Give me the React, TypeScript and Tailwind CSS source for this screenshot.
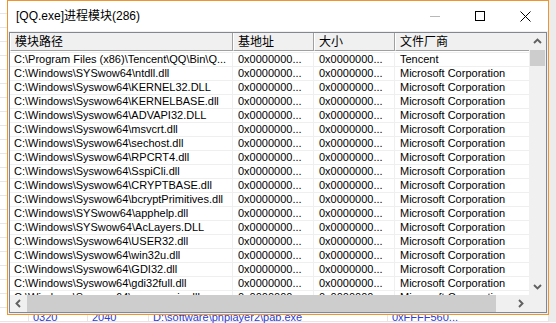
import React from "react";

const MS = "Microsoft Corporation";
const P = "C:\\Windows\\Syswow64\\";
const S = "C:\\Windows\\SYSwow64\\";
const HEX = "0x0000000...";

const rows: [string, string][] = [
  ["C:\\Program Files (x86)\\Tencent\\QQ\\Bin\\Q...", "Tencent"],
  [S + "ntdll.dll", MS],
  [P + "KERNEL32.DLL", MS],
  [P + "KERNELBASE.dll", MS],
  [P + "ADVAPI32.DLL", MS],
  [P + "msvcrt.dll", MS],
  [P + "sechost.dll", MS],
  [P + "RPCRT4.dll", MS],
  [P + "SspiCli.dll", MS],
  [P + "CRYPTBASE.dll", MS],
  [P + "bcryptPrimitives.dll", MS],
  [S + "apphelp.dll", MS],
  [S + "AcLayers.DLL", MS],
  [P + "USER32.dll", MS],
  [P + "win32u.dll", MS],
  [P + "GDI32.dll", MS],
  [P + "gdi32full.dll", MS],
  [P + "msvcp_win.dll", MS],
];

const font = { fontFamily: '"Liberation Sans", Arial, sans-serif' };
const cjk = { fontFamily: '"Liberation Sans", "Noto Sans CJK SC", sans-serif' };

function Chevron({ dir }: { dir: "up" | "down" | "left" | "right" }) {
  const pts =
    dir === "up"
      ? "1,6 4.5,2.5 8,6"
      : dir === "down"
      ? "1,3 4.5,6.5 8,3"
      : dir === "left"
      ? "6,1 2.5,4.5 6,8"
      : "3,1 6.5,4.5 3,8";
  return (
    <svg width="9" height="9" viewBox="0 0 9 9">
      <polyline points={pts} fill="none" stroke="#606060" strokeWidth="1.9" />
    </svg>
  );
}

const bgCols = ["w-[29px]", "w-[59px]", "w-[61px]", "w-[239px]", "w-[161px]"];

function BgRow({ texts }: { texts?: string[] }) {
  return (
    <div className="flex h-[14px] shrink-0">
      {bgCols.map((w, i) => (
        <div
          key={i}
          className={`${w} shrink-0 box-border h-[14px] border-r border-b border-[#e6e6e6] pl-[4px] pt-[3px] leading-[13px] text-[11px] text-[#2a3bd6] whitespace-nowrap`}
          style={font}
        >
          {texts ? texts[i] : ""}
        </div>
      ))}
      <div className="w-[7px] shrink-0 h-[14px] bg-[#ececec]" />
    </div>
  );
}

export default function App() {
  const bgRows = Array.from({ length: 22 });
  return (
    <div className="relative w-[556px] h-[323px] overflow-hidden bg-white">
      {/* background window */}
      <div className="flex flex-col">
        {bgRows.map((_, i) => (
          <BgRow key={i} />
        ))}
        <BgRow texts={["", "0320", "2040", "D:\\software\\pnplayer2\\pab.exe", "0xFFFF560..."]} />
      </div>

      {/* dialog */}
      <div className="absolute left-[7px] top-0 w-[542px] h-[315px] box-border border border-[#f0952b] bg-[#f0f0f0] flex flex-col">
        {/* title bar */}
        <div className="h-[30px] bg-white flex items-center shrink-0">
          <div className="pl-[8px] text-[12px] text-black flex-1 whitespace-nowrap" style={cjk}>
            [QQ.exe]进程模块(286)
          </div>
          <div className="w-[46px] h-[30px] flex items-center justify-center">
            <div className="w-[10px] h-[1px] bg-[#b8b8b8] ml-[3px]" />
          </div>
          <div className="w-[46px] h-[30px] flex items-center justify-center">
            <div className="w-[10px] h-[10px] box-border border border-black ml-[1px]" />
          </div>
          <div className="w-[46px] h-[30px] flex items-center justify-center">
            <svg width="11" height="11" viewBox="0 0 11 11" className="ml-[1px]">
              <path d="M0.5 0.5 L10.5 10.5 M10.5 0.5 L0.5 10.5" stroke="#000" strokeWidth="1" />
            </svg>
          </div>
        </div>

        {/* list view */}
        <div className="mt-[1px] ml-[1px] w-[538px] h-[281px] box-border border border-[#828790] bg-white flex">
          <div className="w-[519px] flex flex-col">
            {/* header */}
            <div className="h-[18px] flex overflow-hidden shrink-0">
              {[
                ["模块路径", "w-[223px]"],
                ["基地址", "w-[81px]"],
                ["大小", "w-[81px]"],
                ["文件厂商", "w-[150px]"],
              ].map(([t, w], i) => (
                <div
                  key={i}
                  className={`${w} shrink-0 box-border h-[18px] border-l border-l-white border-r border-r-[#a0a0a0] border-b border-b-[#a0a0a0] bg-[#f0f0f0] pl-[4px] text-[12px] leading-[16px] text-black whitespace-nowrap`}
                  style={{ fontFamily: '"Noto Sans CJK SC", sans-serif' }}
                >
                  {t}
                </div>
              ))}
            </div>
            {/* rows */}
            <div className="h-[244px] overflow-hidden flex flex-col pt-[1px] shrink-0">
              <div className="border-t border-[#efefef]" />
              {rows.map(([path, vendor], i) => (
                <div key={i} className="flex h-[14px] shrink-0 text-[11px] text-black" style={font}>
                  <div className="w-[223px] shrink-0 box-border h-[14px] border-r border-b border-[#efefef] pl-[4px] leading-[13px] whitespace-nowrap">
                    {path}
                  </div>
                  <div className="w-[81px] shrink-0 box-border h-[14px] border-r border-b border-[#efefef] pl-[5px] leading-[13px] whitespace-nowrap">
                    {HEX}
                  </div>
                  <div className="w-[81px] shrink-0 box-border h-[14px] border-r border-b border-[#efefef] pl-[5px] leading-[13px] whitespace-nowrap">
                    {HEX}
                  </div>
                  <div className="w-[150px] shrink-0 box-border h-[14px] border-r border-b border-[#efefef] pl-[5px] leading-[13px] whitespace-nowrap">
                    {vendor}
                  </div>
                </div>
              ))}
            </div>
            {/* horizontal scrollbar */}
            <div className="h-[17px] bg-[#f0f0f0] flex shrink-0">
              <div className="w-[17px] h-[17px] flex items-center justify-center">
                <Chevron dir="left" />
              </div>
              <div className="w-[469px] h-[17px] bg-[#cdcdcd]" />
              <div className="flex-1" />
              <div className="w-[17px] h-[17px] flex items-center justify-center">
                <Chevron dir="right" />
              </div>
            </div>
          </div>
          {/* vertical scrollbar */}
          <div className="w-[17px] flex flex-col">
            <div className="h-[262px] bg-[#f0f0f0] flex flex-col shrink-0">
              <div className="h-[17px] flex items-center justify-center">
                <Chevron dir="up" />
              </div>
              <div className="h-[16px] mx-[1px] bg-[#cdcdcd]" />
              <div className="flex-1" />
              <div className="h-[17px] flex items-center justify-center">
                <Chevron dir="down" />
              </div>
            </div>
            <div className="h-[17px] bg-[#f0f0f0]" />
          </div>
        </div>
      </div>
    </div>
  );
}
